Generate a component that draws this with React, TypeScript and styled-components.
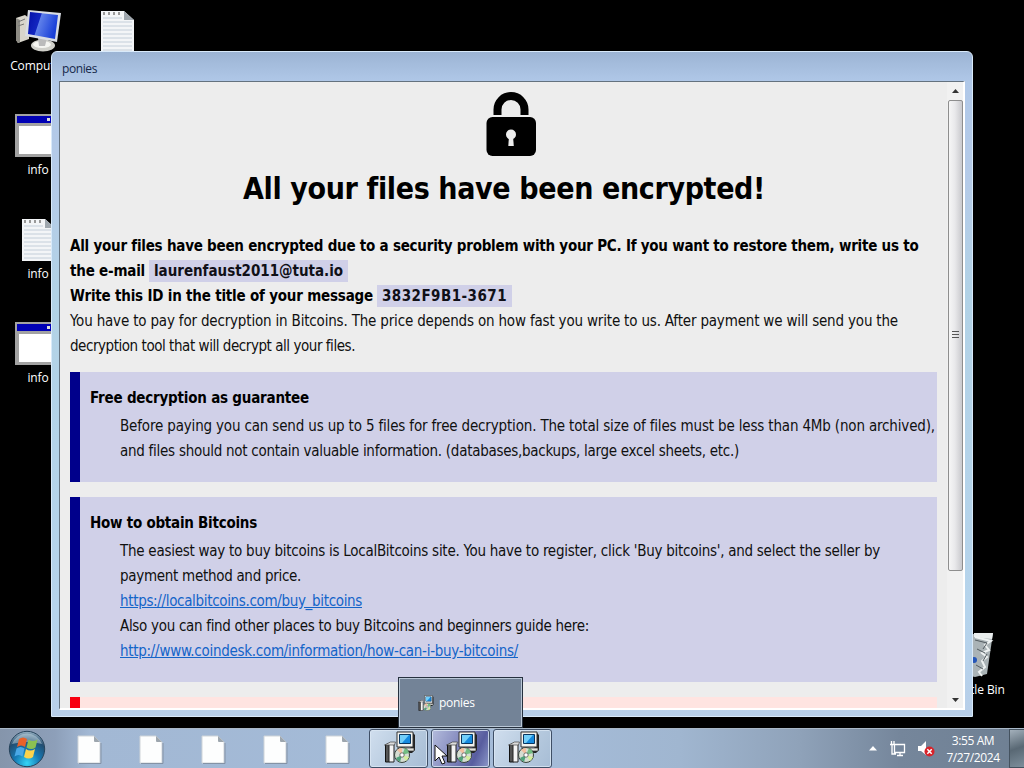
import React from "react";
import styled, { createGlobalStyle, css } from "styled-components";

const Global = createGlobalStyle`
  html, body { margin: 0; background: #000; overflow: hidden; }
  * { box-sizing: border-box; }
`;

const ui = `"Open Sans", sans-serif`;
const doc = `"DejaVu Sans Condensed", "DejaVu Sans", sans-serif`;

const Desktop = styled.div`
  position: relative; width: 1024px; height: 768px; background: #000; overflow: hidden;
  font-family: ${ui}; font-size: 12px;
`;
const DesktopItem = styled.div<{ $x: number; $y: number }>`
  position: absolute; left: ${p => p.$x}px; top: ${p => p.$y}px; width: 76px;
  display: flex; flex-direction: column; align-items: center; gap: 4px;
  color: #fff; font-size: 12px; line-height: 17px; white-space: nowrap;
  letter-spacing: -0.1px;
  svg { display: block; }
`;
const Win = styled.section`
  position: absolute; left: 51px; top: 51px; width: 922px; height: 666px;
  border: 1px solid #d9eafa; border-radius: 6px 6px 0 0; padding: 0 7px 6px;
  background: linear-gradient(#9cb4d4, #b0c8e8 30px, #b5cbe8 130px, #b2d2e6 240px, #b6d4ec 560px, #b8cfe9);
  display: flex; flex-direction: column;
`;
const Caption = styled.header`
  height: 29px; flex: none; padding: 9px 3px 0; font-size: 12px; line-height: 16px; color: #16284a; letter-spacing: -0.4px;
`;
const Client = styled.div`
  flex: 1; min-height: 0; display: flex; background: #ededed;
  border: 1px solid #64727f; border-right: 2px solid #fff; border-bottom: 2px solid #fff;
`;
const Page = styled.main`
  flex: 1; min-width: 0; overflow: hidden; padding: 9px 10px 0 10px;
  font-family: ${doc}; font-size: 15px; line-height: 25px; color: #101010;
  display: flex; flex-direction: column;
`;
const LockWrap = styled.div`height: 66px; padding-left: 416px; flex: none;`;
const Title = styled.h1`
  margin: 14px 0 0; padding-left: 173px; font-size: 30px; line-height: 36px; height: 63px; flex: none; color: #000;
`;
const Line = styled.div<{ $b?: boolean }>`
  height: 25px; flex: none; white-space: nowrap; display: flex; gap: 4px; font-weight: ${p => p.$b ? 700 : 400};
  ${p => p.$b && css`color: #000;`}
`;
const Mark = styled.span<{ $ls: number }>`
  background: #d0d0e8; padding: 0 5px; height: 22px; line-height: 23px; margin-top: 1px; display: block; color: #101018;
  letter-spacing: ${p => p.$ls}px;
`;
const Notes = styled.div`margin-top: -2px; flex: none;`;
const Note = styled.section<{ $h: number; $red?: boolean }>`
  margin-top: 15px; height: ${p => p.$h}px; padding: 14px 0 0 10px;
  border-left: 10px solid ${p => p.$red ? "#f80010" : "#00008b"};
  background: ${p => p.$red ? "#ffe4e1" : "#d0d0e8"};
`;
const Indent = styled.div`padding: 3px 0 0 30px;`;
const Text = styled.span<{ $ls: number }>`
  display: block; width: max-content; white-space: nowrap; letter-spacing: ${p => p.$ls}px;
`;
const Link = styled(Text)`color: #1464c8; text-decoration: underline;`;

const Scroll = styled.div`
  width: 16px; flex: none; background: #f1f1f1; display: flex; flex-direction: column; align-items: center; padding: 7px 0 6px;
`;
const Thumb = styled.div`
  width: 15px; height: 471px; margin: 7px 0 auto; border: 1px solid #8e8e8e; border-radius: 2px;
  background: linear-gradient(90deg, #f6f6f6, #e9e9eb 45%, #c9c9cd); display: flex; align-items: center; justify-content: center;
`;
const Arrow = ({ down }: { down?: boolean }) => <svg width="7" height="4"><path d={down ? "M0 0h7L3.5 4z" : "M0 4h7L3.5 0z"} fill="#333" /></svg>;

const Bar = styled.footer`
  position: absolute; left: 0; right: 0; bottom: 0; height: 40px; display: flex; align-items: stretch;
  border-top: 1px solid #a9b8c8;
  background: linear-gradient(90deg, #8595ab 0, #8d9fb9 55px, #a2b8d4 90px, #a5bcd9 540px, #a0b6d0 680px, #8fa2b9 800px, #75869b 900px, #6f8093);
`;
const Start = styled.div`width: 58px; padding: 1px 0 0 8px;`;
const Pin = styled.div`width: 62px; display: flex; justify-content: center; padding-top: 6px;`;
const Task = styled.div<{ $active?: boolean }>`
  width: 59px; margin: 0 2px 0 1px; display: flex; justify-content: center; padding: 1px 0 0 2px;
  border: 1px solid #3f4f66; border-radius: 3px; box-shadow: inset 0 0 0 1px #dbe7f4cc;
  background: ${p => p.$active ? "linear-gradient(115deg, #b4bcdc, #8288bd 45%, #585d9f 75%, #8d9aca)" : "linear-gradient(120deg, #d0deee, #b9cce0 50%, #a7bdd5)"};
`;
const Tray = styled.div`margin-left: auto; display: flex; align-items: center; gap: 8px;`;
const Clock = styled.div`
  width: 72px; margin-left: -6px; text-align: center; color: #fff; font-size: 12px; line-height: 17px; letter-spacing: -0.4px;
`;
const Peek = styled.div`
  width: 15px; align-self: stretch; margin-left: -8px; border: 1px solid #44525f; border-right: 0; background: linear-gradient(160deg, #a3b0bb, #596874 50%, #7d8e9b);
`;
const Preview = styled.div`
  position: absolute; left: 398px; top: 677px; width: 125px; height: 51px; background: #738397; border: 1px solid #26313f;
  box-shadow: inset 0 0 0 1px #b9c7d6; display: flex; align-items: center; padding-left: 19px; gap: 5px; color: #fff; font-size: 12px; letter-spacing: -0.3px;
`;
const Pointer = styled.svg`position: absolute; left: 434px; top: 744px;`;

const Computer = () => (
  <svg width="46" height="44" viewBox="0 0 46 44">
    <defs><linearGradient id="scr" x1="0" x2="1" y2=".3"><stop offset="0" stopColor="#0510a8" /><stop offset=".42" stopColor="#1226c0" /><stop offset=".45" stopColor="#5f80ea" /><stop offset="1" stopColor="#1a40d8" /></linearGradient></defs>
    <path d="M1 9l9-3 4 3v21L3 34l-2-3z" fill="#d8d5cb" /><path d="M1 9l4 2v22l-2 1-2-3z" fill="#8d8b84" /><path d="M3 13l7-3M3 17l6-2" stroke="#777" />
    <ellipse cx="28" cy="36.500" rx="12" ry="6" fill="#d0d0ca" /><ellipse cx="27" cy="35.500" rx="9" ry="3.500" fill="#f5f5f1" /><path d="M23 29h9l-2 8h-6z" fill="#bbb" />
    <path d="M13 1l33 3-4 29-32-6z" fill="#d9dde4" /><path d="M15 3l28 3-3 24-27-5z" fill="url(#scr)" />
  </svg>
);
const Notepad = () => (
  <svg width="33" height="43" viewBox="0 0 33 43">
    <path d="M0 1h23l10 9v33H0z" fill="#f3f5f7" /><path d="M23 1l10 9H23z" fill="#9fa7ae" />
    <path d="M2 8h19M2 12h29M2 16h29M2 20h29M2 24h29M2 28h29M2 32h29M2 36h29M2 40h29" stroke="#c3ced9" />
    <path d="M2 3.500h20" stroke="#999" strokeWidth="3" strokeDasharray="2 3" />
  </svg>
);
const AppWindow = () => (
  <svg width="46" height="43" viewBox="0 0 46 43">
    <path d="M0 0h46v43H0z" fill="#a2a2a2" /><path d="M2 2h42v7H2z" fill="#0000b4" /><path d="M4 12h40v28H4z" fill="#fff" /><path d="M32 4h3v3h-3z" fill="#ddd" />
  </svg>
);
const Bin = () => (
  <svg width="42" height="46" viewBox="0 0 42 46">
    <path d="M2 4l38-2-6 41-12 3-14-3z" fill="#aab3b6" /><path d="M21 2l19 0-1 6-18-2z" fill="#e9eded" /><path d="M22 6l16 4-6 4 4 5-7 3 5 4-5 4 3 6-6 5 3 4" stroke="#eef2f2" strokeWidth="2" fill="none" /><path d="M22 9l12 3-4 6M24 18l8 4M23 34l7 4M34 23l-4 7" stroke="#525b60" fill="none" /><circle cx="21" cy="29" r="3" fill="#2456b8" />
  </svg>
);
const Blank = () => (
  <svg width="25" height="29" viewBox="0 0 25 29"><path d="M1 1h16l6 6v21H1z" fill="#fdfefe" stroke="#cfd4d8" /><path d="M17 1l6 6h-5q-1 0-1-1z" fill="#9da6ae" /><path d="M2 28.500h22V8" stroke="#8493a6" fill="none" /></svg>
);
const Installer = ({ s = 32 }: { s?: number }) => (
  <svg width={s} height={s} viewBox="0 0 32 32">
    <path d="M29 2l2 2v15l-3 3H15v-3h11z" fill="#222" />
    <path d="M13 1h16v15H13z" fill="#f2f2ee" stroke="#333" /><path d="M15.500 3.500h11v9h-11z" fill="#168be0" stroke="#083660" /><path d="M16 4h9l-7 8h-2z" fill="#72cff9" />
    <path d="M14 17h16v3H14z" fill="#e4e4de" stroke="#333" strokeWidth=".7" />
    <path d="M1.500 14l4-2v19h-4z" fill="#555" stroke="#111" /><path d="M5 13h5v18H5z" fill="#f4f4f4" stroke="#222" />
    <path d="M0.500 14l6-3 5 0-1 3H5z" fill="#ddd" stroke="#444" strokeWidth=".7" />
    <circle cx="18" cy="24" r="7.500" fill="#d5ddd2" stroke="#39433a" /><path d="M18 24l-5-5a7 7 0 0 1 5-2z" fill="#f2bfa0" /><path d="M18 24l3-7a7 7 0 0 1 4 5z" fill="#73bd83" /><path d="M18 24l-6 3a7 7 0 0 0 4 4z" fill="#4fa27a" /><path d="M18 24l4 6a7 7 0 0 0 3-4z" fill="#d4ef9c" />
    <circle cx="18" cy="24" r="2.200" fill="#fff" stroke="#444" strokeWidth=".7" />
  </svg>
);
const Orb = () => (
  <svg width="38" height="38" viewBox="0 0 38 38">
    <defs><radialGradient id="orb" cx=".5" cy=".9" r=".9"><stop offset="0" stopColor="#35d5f6" /><stop offset=".4" stopColor="#1579b4" /><stop offset=".75" stopColor="#234d70" /><stop offset="1" stopColor="#9bb5c6" /></radialGradient></defs>
    <circle cx="19" cy="19" r="17.700" fill="url(#orb)" stroke="#26435b" /><path d="M4 14a16 16 0 0 1 30 0q-15-4-30 0z" fill="#d5e6ee" opacity=".45" />
    <path d="M11 9q4-3 8 0l-2 8q-4-3-8 0z" fill="#e8622a" /><path d="M20.500 9.500q4 3 9 0l-2 8q-4 3-9 0z" fill="#8cc152" /><path d="M8.500 18.500q4-3 8 0l-2 8q-4-3-8 0z" fill="#4aa8e6" /><path d="M18 19q4 3 9 0l-2 8q-4 3-9 0z" fill="#fbd34c" />
  </svg>
);
const Lock = () => (
  <svg width="50" height="66" viewBox="0 0 50 66">
    <path d="M7.500 24V18.500a17.500 17.500 0 0 1 35 0V24h-8v-5.500a9.500 9.500 0 0 0-19 0V24z" fill="#000" />
    <rect x=".5" y="26" width="49.500" height="39" rx="6" fill="#000" /><circle cx="25" cy="43.500" r="5" fill="#ededed" /><path d="M23 45h4l.8 10h-5.500z" fill="#ededed" />
  </svg>
);

export default function App() {
  return (
    <Desktop>
      <Global />
      <DesktopItem $x={0} $y={9}><Computer />Computer</DesktopItem>
      <DesktopItem $x={79} $y={10}><Notepad /></DesktopItem>
      <DesktopItem $x={0} $y={114}><AppWindow />info</DesktopItem>
      <DesktopItem $x={0} $y={218}><Notepad />info</DesktopItem>
      <DesktopItem $x={0} $y={322}><AppWindow />info</DesktopItem>
      <DesktopItem $x={936} $y={631}><Bin />Recycle Bin</DesktopItem>
      <Win>
        <Caption>ponies</Caption>
        <Client>
          <Page>
            <LockWrap><Lock /></LockWrap>
            <Title><Text $ls={-0.363}>All your files have been encrypted!</Text></Title>
            <Line $b><Text $ls={-0.235}>All your files have been encrypted due to a security problem with your PC. If you want to restore them, write us to</Text></Line>
            <Line $b><Text $ls={-0.209}>the e-mail</Text><Mark $ls={-0.023}>laurenfaust2011@tuta.io</Mark></Line>
            <Line $b><Text $ls={-0.201}>Write this ID in the title of your message</Text><Mark $ls={0.46}>3832F9B1-3671</Mark></Line>
            <Line><Text $ls={-0.178}>You have to pay for decryption in Bitcoins. The price depends on how fast you write to us. After payment we will send you the</Text></Line>
            <Line><Text $ls={-0.452}>decryption tool that will decrypt all your files.</Text></Line>
            <Notes>
              <Note $h={110}>
                <Line $b><Text $ls={-0.209}>Free decryption as guarantee</Text></Line>
                <Indent>
                  <Line><Text $ls={-0.164}>Before paying you can send us up to 5 files for free decryption. The total size of files must be less than 4Mb (non archived),</Text></Line>
                  <Line><Text $ls={-0.267}>and files should not contain valuable information. (databases,backups, large excel sheets, etc.)</Text></Line>
                </Indent>
              </Note>
              <Note $h={185}>
                <Line $b><Text $ls={-0.249}>How to obtain Bitcoins</Text></Line>
                <Indent>
                  <Line><Text $ls={-0.262}>The easiest way to buy bitcoins is LocalBitcoins site. You have to register, click 'Buy bitcoins', and select the seller by</Text></Line>
                  <Line><Text $ls={-0.294}>payment method and price.</Text></Line>
                  <Line><Link $ls={-0.331}>https://localbitcoins.com/buy_bitcoins</Link></Line>
                  <Line><Text $ls={-0.304}>Also you can find other places to buy Bitcoins and beginners guide here:</Text></Line>
                  <Line><Link $ls={-0.279}>http://www.coindesk.com/information/how-can-i-buy-bitcoins/</Link></Line>
                </Indent>
              </Note>
              <Note $h={60} $red />
            </Notes>
          </Page>
          <Scroll><Arrow /><Thumb><svg width="7" height="10"><path d="M0 .500h7M0 3.500h7M0 6.500h7" stroke="#555" /></svg></Thumb><Arrow down /></Scroll>
        </Client>
      </Win>
      <Bar>
        <Start><Orb /></Start>
        <Pin><Blank /></Pin><Pin><Blank /></Pin><Pin><Blank /></Pin><Pin><Blank /></Pin><Pin><Blank /></Pin>
        <Task><Installer /></Task><Task $active><Installer /></Task><Task><Installer /></Task>
        <Tray>
          <svg width="8" height="5"><path d="M0 4.500h8L4 0z" fill="#fff" /></svg>
          <svg width="25" height="16" viewBox="-4 0 25 16"><path d="M5.500 3.500h10v8h-10zM8 14.500h6M11 12v2M2.500 0v3M5 0v3M1 3.500h5M3 4v9h4" fill="none" stroke="#fff" strokeWidth="1.300" /></svg>
          <svg width="17" height="16" viewBox="0 0 17 16"><path d="M0 5h3l5-5v14L3 10H0z" fill="#fff" /><circle cx="11.500" cy="10.500" r="5" fill="#d8232a" /><path d="M9.300 8.300l4.400 4.400m0-4.400l-4.400 4.400" stroke="#fff" strokeWidth="1.500" /></svg>
          <Clock>3:55 AM<br />7/27/2024</Clock>
          <Peek />
        </Tray>
      </Bar>
      <Preview><Installer s={16} />ponies</Preview>
      <Pointer width="14" height="22" viewBox="0 0 14 22"><path d="M1 1v16l4-4 3 7 3-1-3-7h5z" fill="#fff" stroke="#111" /></Pointer>
    </Desktop>
  );
}
